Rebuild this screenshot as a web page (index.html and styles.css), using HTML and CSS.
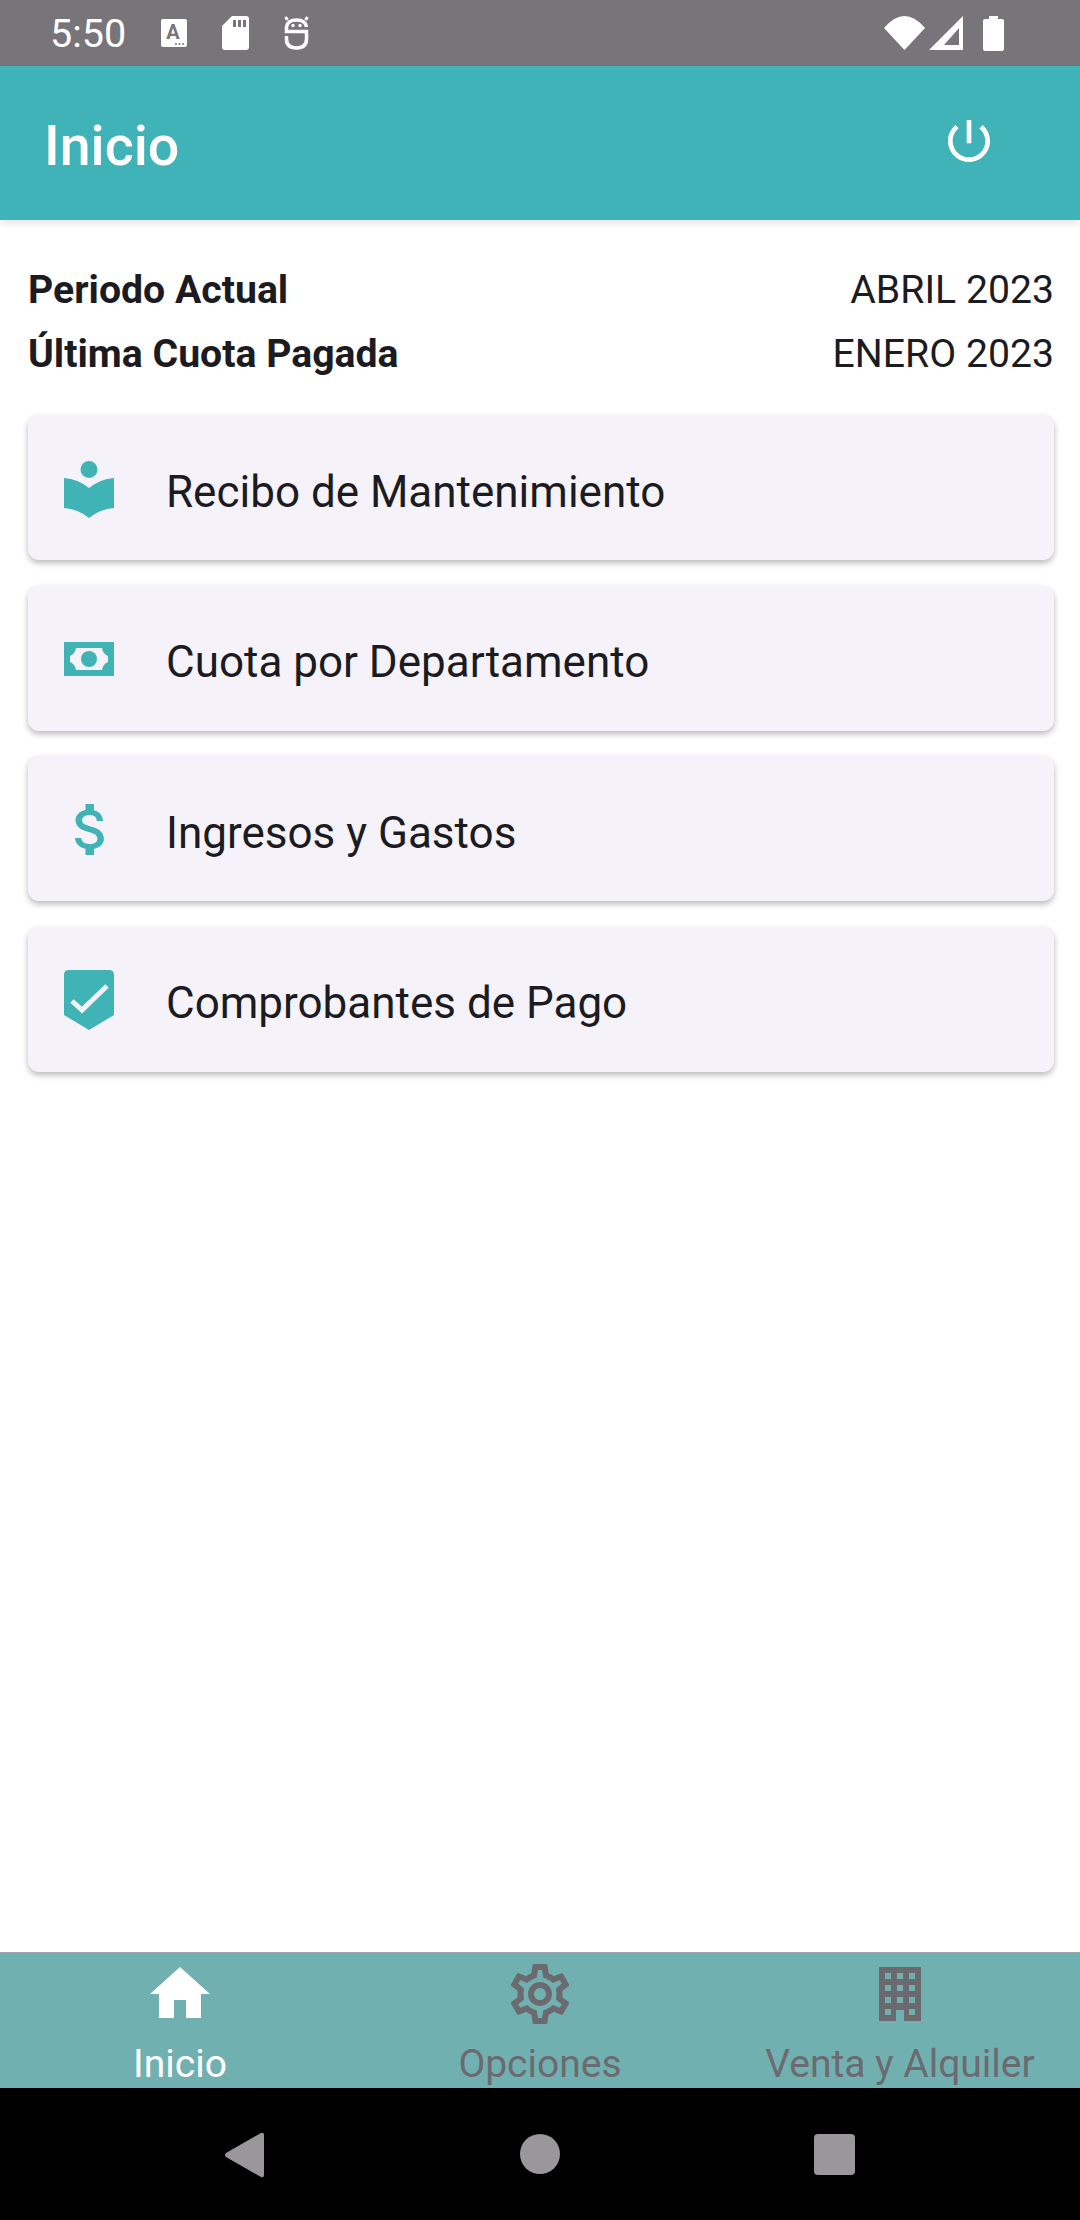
FILE: index.html
```html
<!DOCTYPE html>
<html lang="es">
<head>
<meta charset="UTF-8">
<meta name="viewport" content="width=device-width, initial-scale=1.0">
<title>Inicio</title>
<link rel="stylesheet" href="styles.css">
</head>
<body>
<div class="phone">
    <div class="status-bar">
        <span class="clock">5:50</span>
        <div class="status-left">
            <svg width="26" height="28" viewBox="0 0 26 28"><rect width="26" height="28" rx="2" fill="#fff"/><text x="12" y="20" class="status-letter">A</text><circle cx="15" cy="25" r="1" fill="#78757a"/><circle cx="18.5" cy="25" r="1" fill="#78757a"/><circle cx="22" cy="25" r="1" fill="#78757a"/></svg>
            <svg width="27" height="34" viewBox="0 0 27 34"><path d="M10 0H24Q27 0 27 3V31Q27 34 24 34H3Q0 34 0 31V10Z" fill="#fff"/><path d="M11 4h3v7h-3zM16 4h3v7h-3zM21 4h3v7h-3z" fill="#78757a"/></svg>
            <svg width="25" height="34" viewBox="0 0 25 34" fill="none" stroke="#fff" stroke-width="3.5"><path d="M22.500 11Q21.500 4 12.500 4Q3.500 4 2.500 11V15.500H22.500V23Q22.500 32 12.500 32Q2.500 32 2.500 23V20"/><path d="M3.500 4L1.500 1M21.500 4L23.500 1" stroke-width="3"/><circle cx="9" cy="9.500" r="1.700" fill="#fff" stroke="none"/><circle cx="16" cy="9.500" r="1.700" fill="#fff" stroke="none"/></svg>
        </div>
        <div class="status-right">
            <svg class="wifi" width="41" height="34" viewBox="0 0 41 34"><path d="M0 12Q20.500 -12 41 12L20.500 34Z" fill="#fff"/></svg>
            <svg class="signal" width="34" height="34" viewBox="0 0 34 34"><path fill-rule="evenodd" d="M0 34L34 0V34ZM15 29H30V12Z" fill="#fff"/></svg>
            <svg class="battery" width="21" height="35" viewBox="0 0 21 35"><path d="M6 0H15V3H19Q21 3 21 5V33Q21 35 19 35H2Q0 35 0 33V5Q0 3 2 3H6Z" fill="#fff"/></svg>
        </div>
    </div>

    <header class="app-bar">
        <h1>Inicio</h1>
        <svg class="power" width="56" height="56" viewBox="0 0 24 24"><path d="M13 3h-2v10h2V3zm4.830 2.170l-1.420 1.420C17.990 7.860 19 9.810 19 12c0 3.870-3.130 7-7 7s-7-3.130-7-7c0-2.190 1.010-4.140 2.580-5.420L6.170 5.170C4.230 6.820 3 9.260 3 12c0 4.970 4.030 9 9 9s9-4.030 9-9c0-2.740-1.230-5.180-3.170-6.830z" fill="#fff"/></svg>
    </header>

    <main class="content">
        <div class="info-row"><b>Periodo Actual</b><span>ABRIL 2023</span></div>
        <div class="info-row"><b>Última Cuota Pagada</b><span>ENERO 2023</span></div>

        <div class="menu">
            <div class="card">
                <span class="card-icon card-icon-book">
                    <svg width="50" height="57" viewBox="0 0 50 57"><circle cx="25" cy="8.500" r="8.500" fill="#3fb3b5"/><path d="M0 17Q14 18 25 27Q36 18 50 17V47Q36 48 25 57Q14 48 0 47Z" fill="#3fb3b5"/></svg>
                </span>
                <span class="card-label">Recibo de Mantenimiento</span>
            </div>
            <div class="card">
                <span class="card-icon">
                    <svg width="50" height="34" viewBox="0 0 50 34"><path fill-rule="evenodd" d="M0 0H50V34H0ZM12 6Q11 12 6 14V20Q11 22 12 28H38Q39 22 44 20V14Q39 12 38 6Z" fill="#3fb3b5"/><circle cx="25" cy="17" r="8" fill="#3fb3b5"/></svg>
                </span>
                <span class="card-label">Cuota por Departamento</span>
            </div>
            <div class="card">
                <span class="card-icon">
                    <svg width="30" height="51" viewBox="6 3 10.500 18"><path d="M11.800 10.900c-2.270-.59-3-1.200-3-2.150 0-1.090 1.010-1.850 2.700-1.850 1.780 0 2.440.85 2.500 2.100h2.210c-.07-1.720-1.120-3.300-3.210-3.810V3h-3v2.160c-1.940.42-3.500 1.680-3.500 3.610 0 2.310 1.910 3.460 4.700 4.130 2.500.6 3 1.480 3 2.410 0 .69-.49 1.790-2.700 1.790-2.060 0-2.870-.92-2.980-2.100h-2.200c.12 2.190 1.760 3.420 3.680 3.830V21h3v-2.150c1.950-.37 3.500-1.500 3.500-3.550 0-2.840-2.430-3.810-4.700-4.400z" fill="#3fb3b5"/></svg>
                </span>
                <span class="card-label">Ingresos y Gastos</span>
            </div>
            <div class="card">
                <span class="card-icon">
                    <svg width="50" height="60" viewBox="0 0 50 60"><path d="M5 0H45Q50 0 50 5V45L25 60L0 45V5Q0 0 5 0Z" fill="#3fb3b5"/><path d="M8 31L18 40L43 16" fill="none" stroke="#f5f3f9" stroke-width="5"/></svg>
                </span>
                <span class="card-label">Comprobantes de Pago</span>
            </div>
        </div>
    </main>

    <nav class="tabs">
        <div class="tab tab-active">
            <svg width="72" height="72" viewBox="0 0 24 24"><path d="M10 20v-6h4v6h5v-8h3L12 3 2 12h3v8z" fill="currentColor"/></svg>
            <span>Inicio</span>
        </div>
        <div class="tab">
            <svg width="72" height="72" viewBox="0 0 24 24"><path d="M19.430 12.980c.04-.32.07-.64.07-.98 0-.34-.03-.66-.07-.98l2.110-1.650c.19-.15.24-.42.12-.64l-2-3.460c-.09-.16-.26-.25-.44-.25-.06 0-.12.01-.17.03l-2.490 1c-.52-.4-1.080-.73-1.690-.98l-.38-2.650C14.460 2.180 14.250 2 14 2h-4c-.25 0-.46.18-.49.42l-.38 2.650c-.61.25-1.170.59-1.690.98l-2.490-1c-.06-.02-.12-.03-.18-.03-.17 0-.34.09-.43.25l-2 3.460c-.13.22-.07.49.12.64l2.110 1.650c-.04.32-.07.65-.07.98 0 .33.03.66.07.98l-2.110 1.650c-.19.15-.24.42-.12.64l2 3.460c.09.16.26.25.44.25.06 0 .12-.01.17-.03l2.490-1c.52.4 1.080.73 1.690.98l.38 2.650c.03.24.24.42.49.42h4c.25 0 .46-.18.49-.42l.38-2.650c.61-.25 1.170-.59 1.690-.98l2.490 1c.06.02.12.03.18.03.17 0 .34-.09.43-.25l2-3.460c.12-.22.07-.49-.12-.64l-2.110-1.650zm-1.980-1.710c.04.31.05.52.05.73 0 .21-.02.43-.05.73l-.14 1.130.89.7 1.080.84-.7 1.210-1.270-.51-1.040-.42-.9.68c-.43.32-.84.56-1.250.73l-1.060.43-.16 1.130-.2 1.350h-1.400l-.19-1.350-.16-1.130-1.060-.43c-.43-.18-.83-.41-1.230-.71l-.91-.7-1.060.43-1.270.51-.7-1.210 1.080-.84.89-.7-.14-1.130c-.03-.31-.05-.54-.05-.74s.02-.43.05-.73l.14-1.130-.89-.7-1.080-.84.7-1.210 1.270.51 1.040.42.9-.68c.43-.32.84-.56 1.250-.73l1.060-.43.16-1.130.2-1.350h1.390l.19 1.350.16 1.130 1.060.43c.43.18.83.41 1.230.71l.91.7 1.060-.43 1.270-.51.7 1.210-1.070.85-.89.7.14 1.130zM12 8c-2.210 0-4 1.790-4 4s1.790 4 4 4 4-1.790 4-4-1.790-4-4-4zm0 6c-1.100 0-2-.9-2-2s.9-2 2-2 2 .9 2 2-.9 2-2 2z" fill="currentColor"/></svg>
            <span>Opciones</span>
        </div>
        <div class="tab">
            <svg width="72" height="72" viewBox="0 0 72 72"><path fill-rule="evenodd" d="M15 9H57V63H40V52H32V63H15ZM21 15V21H27V15ZM33 15V21H39V15ZM45 15V21H51V15ZM21 27V33H27V27ZM33 27V33H39V27ZM45 27V33H51V27ZM21 39V45H27V39ZM33 39V45H39V39ZM45 39V45H51V39ZM21 51V57H27V51ZM45 51V57H51V51Z" fill="currentColor"/></svg>
            <span>Venta y Alquiler</span>
        </div>
    </nav>

    <div class="nav-bar">
        <svg class="nav-back" width="40" height="46" viewBox="0 0 40 46"><path d="M37 1L2 21Q0 23 2 25L37 45Q40 46 40 43V3Q40 0 37 1Z" fill="#9a979a"/></svg>
        <span class="nav-home"></span>
        <span class="nav-recent"></span>
    </div>
</div>
</body>
</html>
```

FILE: styles.css
```css
* {
    box-sizing: border-box;
}
body {
    margin: 0;
    font-family: Roboto, "Liberation Sans", sans-serif;
    background-color: #fff;
    overflow: hidden;
}
.phone {
    display: flex;
    flex-direction: column;
    width: 1080px;
    height: 2220px;
}

/* status bar */
.status-bar {
    display: flex;
    align-items: center;
    height: 66px;
    padding: 0 76px 0 50px;
    background-color: #78757a;
    color: #fff;
}
.clock {
    font-size: 39.500px;
    width: 111px;
}
.status-left {
    display: flex;
    align-items: center;
    gap: 35px;
}
.status-letter {
    font-family: Roboto, sans-serif;
    font-size: 20px;
    font-weight: 700;
    fill: #78757a;
    text-anchor: middle;
}
.status-right {
    display: flex;
    align-items: center;
    margin-left: auto;
}
.signal {
    margin-left: 4px;
}
.battery {
    margin-left: 20px;
}

/* app bar */
.app-bar {
    display: flex;
    align-items: center;
    justify-content: space-between;
    height: 154px;
    padding: 6px 83px 0 44px;
    background-color: #3fb3b7;
    box-shadow: 0 3px 8px rgba(0, 0, 0, 0.12);
    position: relative;
}
.app-bar h1 {
    margin: 0;
    font-size: 55.500px;
    font-weight: 500;
    color: #fff;
}
.power {
    margin-bottom: 10px;
}

/* content */
.content {
    flex: 1;
    padding: 38px 26px 0 28px;
    color: #1c1b1f;
}
.info-row {
    display: flex;
    justify-content: space-between;
    align-items: center;
    height: 64px;
    font-size: 39.200px;
}
.menu {
    display: flex;
    flex-direction: column;
    gap: 25.500px;
    margin-top: 29px;
}
.card {
    display: flex;
    align-items: center;
    height: 145px;
    padding-top: 2px;
    background-color: #f5f3f9;
    border-radius: 11px;
    box-shadow: 0 3px 6px rgba(0, 0, 0, 0.28);
    font-size: 44px;
}
.card-label {
    margin-top: 6px;
}
.card-icon {
    display: flex;
    justify-content: center;
    width: 50px;
    margin: 0 52px 0 36px;
}
.card-icon-book {
    margin-top: 2px;
}

/* bottom tabs */
.tabs {
    display: grid;
    grid-template-columns: repeat(3, 1fr);
    height: 136px;
    background-color: #71b0b0;
    border-top: 1px solid #9ea4b0;
}
.tab {
    display: flex;
    flex-direction: column;
    align-items: center;
    padding-top: 5px;
    font-size: 39px;
    color: #6b6b6f;
}
.tab span {
    margin-top: 11px;
    line-height: 46px;
}
.tab-active {
    color: #fff;
}

/* system navigation */
.nav-bar {
    position: relative;
    height: 132px;
    background-color: #000;
}
.nav-back {
    position: absolute;
    left: 224px;
    top: 44px;
}
.nav-home {
    position: absolute;
    left: 520px;
    top: 46px;
    width: 40px;
    height: 40px;
    border-radius: 50%;
    background-color: #9a979a;
}
.nav-recent {
    position: absolute;
    left: 814px;
    top: 46px;
    width: 41px;
    height: 41px;
    border-radius: 4px;
    background-color: #9a979a;
}
```
